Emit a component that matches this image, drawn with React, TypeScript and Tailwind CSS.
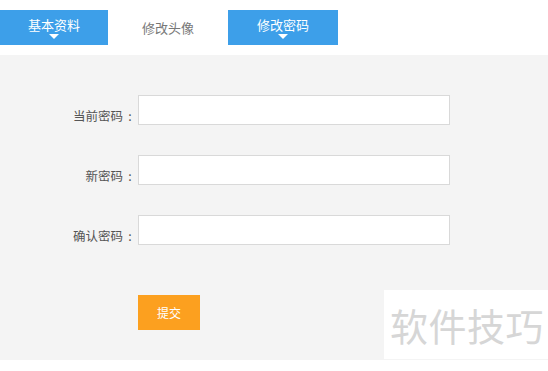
const font = { fontFamily: '"Noto Sans CJK SC", "Noto Sans", sans-serif' };

function Tab({ label, active }: { label: string; active: boolean }) {
  if (!active) {
    return (
      <div className="w-[120px] h-[35px] flex items-center justify-center text-[13px] text-[#777]">
        {label}
      </div>
    );
  }
  return (
    <div className="w-[110px] h-[35px] bg-[#3d9fe9] flex flex-col items-center justify-center text-white">
      <span className="text-[13px] leading-[16px] mt-[1px]">{label}</span>
      <span className="w-0 h-0 border-l-[5px] border-r-[5px] border-t-[5px] border-l-transparent border-r-transparent border-t-white mt-[1px]" />
    </div>
  );
}

function Row({ label }: { label: string }) {
  return (
    <div className="flex items-start h-[30px]">
      <label className="w-[137px] flex justify-end text-[12.5px] leading-[14px] text-[#555] pt-[14px]">
        <span>{label}</span>
        <span className="w-[14px] text-center">:</span>
      </label>
      <input className="ml-[1px] w-[312px] h-[30px] bg-white border border-[#d9d9d9] outline-none" />
    </div>
  );
}

export default function App() {
  return (
    <div className="w-[548px] h-[371px] bg-white pt-[10px] overflow-hidden" style={font}>
      <div className="flex">
        <div className="w-[108px] h-[35px] bg-[#3d9fe9] flex flex-col items-center justify-center text-white">
          <span className="text-[13px] leading-[16px] mt-[1px]">基本资料</span>
          <span className="w-0 h-0 border-l-[5px] border-r-[5px] border-t-[5px] border-l-transparent border-r-transparent border-t-white mt-[1px]" />
        </div>
        <Tab label="修改头像" active={false} />
        <Tab label="修改密码" active={true} />
      </div>
      <div className="relative mt-[10px] h-[305px] bg-[#f4f4f4] pt-[40px]">
        <div className="flex flex-col gap-[30px]">
          <Row label="当前密码" />
          <Row label="新密码" />
          <Row label="确认密码" />
        </div>
        <button className="ml-[138px] mt-[50px] w-[62px] h-[35px] bg-[#fca01f] text-white text-[12px]">
          提交
        </button>
        <div className="absolute left-[384px] top-[235px] w-[164px] h-[69px] bg-white flex items-start pl-[6px] pt-[13px]">
          <span className="text-[38px] leading-[44px] text-[#d6d6d6] tracking-[0.5px]">软件技巧</span>
        </div>
      </div>
    </div>
  );
}
